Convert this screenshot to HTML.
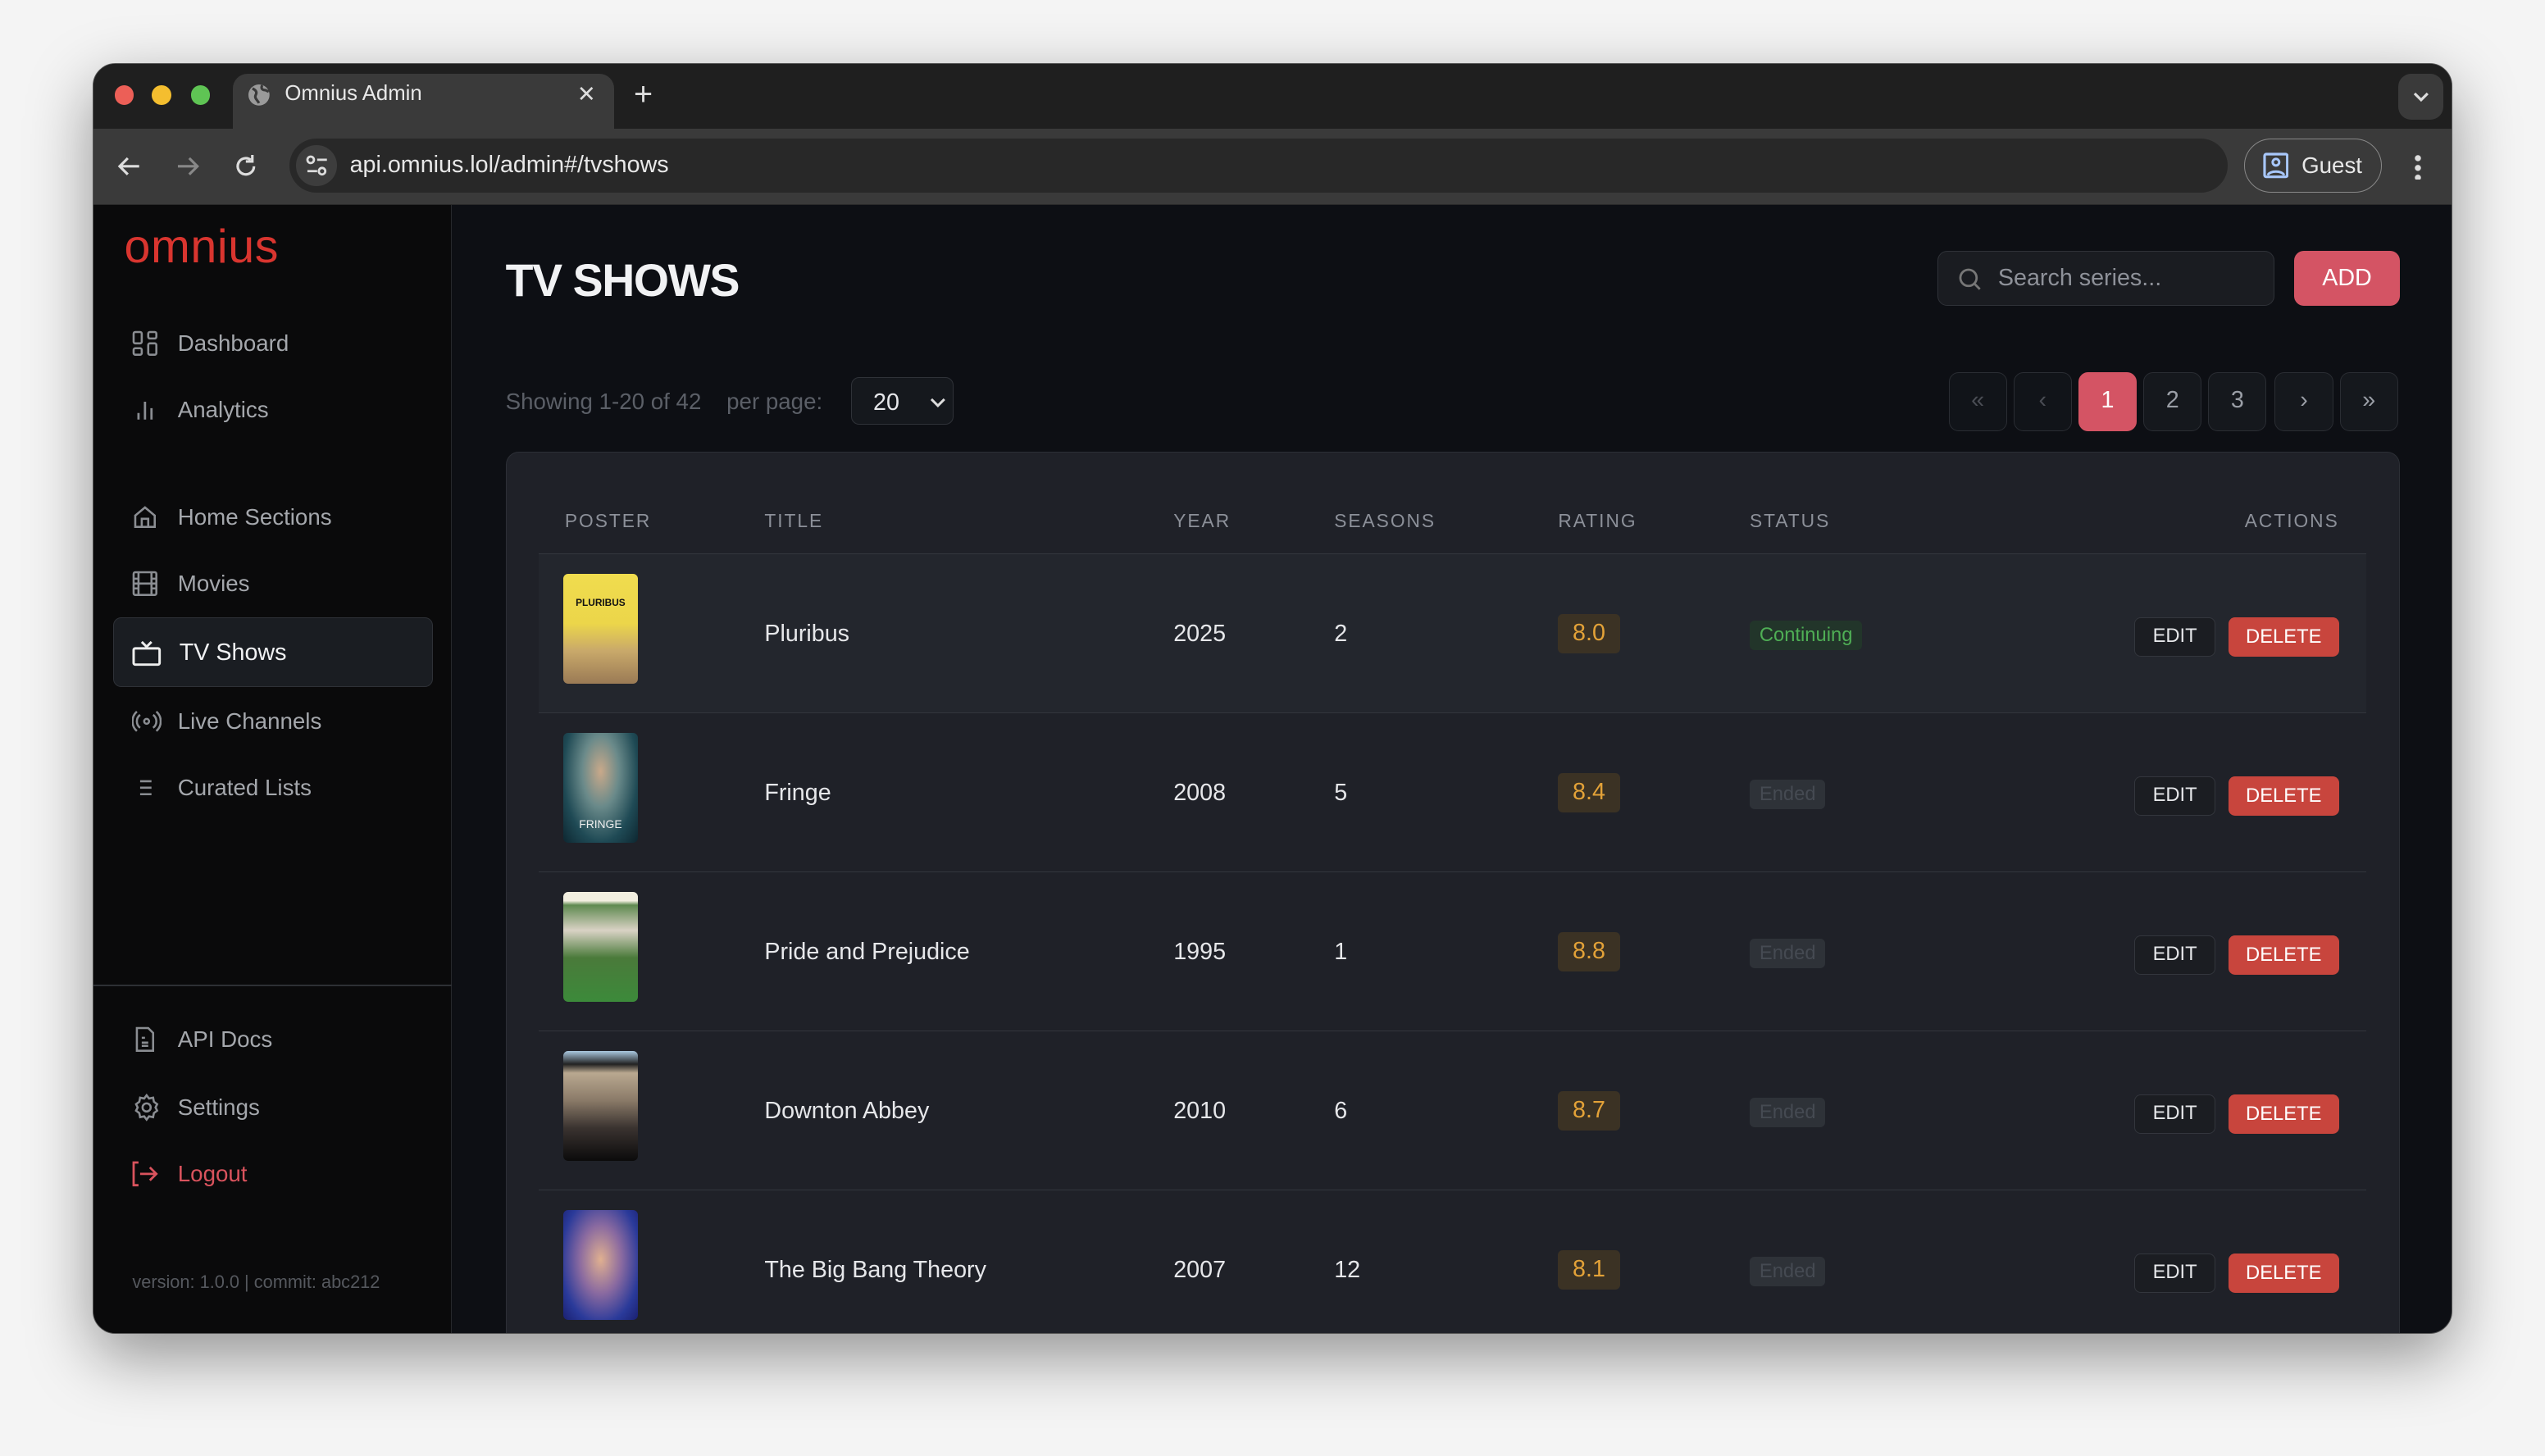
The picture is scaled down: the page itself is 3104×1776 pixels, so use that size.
<!DOCTYPE html>
<html><head><meta charset="utf-8">
<style>
*{box-sizing:border-box;margin:0;padding:0}
html,body{width:3104px;height:1776px;overflow:hidden;background:#f3f3f3}
#z{zoom:1.9796;width:1568px;height:897px;position:relative;font-family:"Liberation Sans",sans-serif;background:#f4f4f4}
.a{position:absolute}
.win{left:57px;top:39px;width:1454px;height:783px;border-radius:14px;background:#0d0f14;overflow:hidden;box-shadow:0 14px 40px rgba(0,0,0,.4);border:1px solid #555}
.tabbar{left:0;top:0;width:1454px;height:40px;background:#1f1f1f}
.tl{width:12px;height:12px;border-radius:50%;top:13px}
.tab{left:86px;top:6px;width:235px;height:36px;background:#3a3a3a;border-radius:9px 9px 0 0;color:#e8e8e8;font-size:13px}
.toolbar{left:0;top:40px;width:1454px;height:47px;background:#3a3a3a;border-bottom:1px solid #2a2a2a}
.url{left:121px;top:6px;width:1194px;height:33px;border-radius:17px;background:#282828;color:#e8e8e8;font-size:14.5px}
.side{left:0;top:87px;width:221px;height:700px;background:#0a0a0b;border-right:1px solid #26282c}
.nav{left:24px;font-size:14px;color:#a4a7ac;height:20px;line-height:20px}
.nav svg{position:absolute;left:0;top:2px}
.nav span{position:absolute;left:28px;white-space:nowrap}
.main{left:221px;top:87px;width:1233px;height:700px}
.card{left:254px;top:152px;width:1167px;height:600px;background:#1f2128;border:1px solid #2c2f36;border-radius:8px}
.th{top:35px;font-size:11.5px;letter-spacing:1px;color:#8c9099}
.row{left:20px;width:1126px;height:98px;border-top:1px solid #33363d}
.row .c{position:absolute;top:0;height:98px;line-height:98px;font-size:14.5px;color:#e6e7ea}
.poster{position:absolute;left:15px;top:12px;width:46px;height:68px;border-radius:3px;overflow:hidden}
.rat{position:absolute;left:628px;top:37px;width:38px;height:24px;border-radius:3px;background:#3b3224;color:#e3a238;font-size:14.5px;text-align:center;line-height:24px}
.st{position:absolute;left:746px;top:41px;height:18px;border-radius:3px;font-size:12px;line-height:18px;padding:0 6px}
.edit{position:absolute;left:983px;top:39px;width:50px;height:24px;border:1px solid #33363d;border-radius:4px;background:#1b1d22;color:#e6e7ea;font-size:12px;text-align:center;line-height:22px}
.del{position:absolute;left:1041px;top:39px;width:68px;height:24px;border-radius:4px;background:#c8453d;color:#fff;font-size:12px;text-align:center;line-height:24px}
.pg{top:103px;width:36px;height:36px;border:1px solid #2a2d33;border-radius:6px;background:#15181d;color:#9a9ea6;font-size:14.5px;text-align:center;line-height:34px}
</style></head><body><div id="z">
<div class="a win">
 <div class="a tabbar">
  <div class="a tl" style="left:13px;background:#ec5f57"></div>
  <div class="a tl" style="left:36px;background:#f4be2f"></div>
  <div class="a tl" style="left:60px;background:#5fc454"></div>
  <div class="a tab">
   <svg class="a" style="left:9px;top:6px" width="14" height="14" viewBox="0 0 14 14"><circle cx="7" cy="7" r="6.5" fill="#9a9a9a"/><path d="M3 3c2 1 3 2 2 4s1 3 2 5M9 1c-1 2 0 3 2 3l2 1" stroke="#3a3a3a" stroke-width="1.6" fill="none"/></svg>
   <span class="a" style="left:32px;top:5px">Omnius Admin</span>
   <span class="a" style="left:212px;top:4px;font-size:14px;color:#ddd">✕</span>
  </div>
  <span class="a" style="left:333px;top:9px;color:#ddd;font-size:20px;line-height:20px">+</span>
  <div class="a" style="left:1420px;top:6px;width:28px;height:28px;border-radius:8px;background:#3a3a3a"><svg class="a" style="left:9px;top:10px" width="10" height="8"><path d="M1 2l4 4 4-4" stroke="#ddd" stroke-width="1.6" fill="none"/></svg></div>
 </div>
 <div class="a toolbar">
  <svg class="a" style="left:14px;top:15px" width="16" height="16"><path d="M14 8H2M7 3L2 8l5 5" stroke="#ddd" stroke-width="1.6" fill="none"/></svg>
  <svg class="a" style="left:50px;top:15px" width="16" height="16"><path d="M2 8h12M9 3l5 5-5 5" stroke="#888" stroke-width="1.6" fill="none"/></svg>
  <svg class="a" style="left:86px;top:15px" width="16" height="16"><path d="M13 8a5 5 0 1 1-2-4M12 1v4H8" stroke="#ddd" stroke-width="1.6" fill="none"/></svg>
  <div class="a url">
   <div class="a" style="left:4px;top:4px;width:25px;height:25px;border-radius:50%;background:#3d3d3d"></div>
   <svg class="a" style="left:9px;top:9px" width="16" height="16"><circle cx="4" cy="4" r="2" stroke="#ddd" fill="none" stroke-width="1.4"/><path d="M8 4h6M2 11h6" stroke="#ddd" stroke-width="1.4"/><circle cx="11" cy="11" r="2" stroke="#ddd" fill="none" stroke-width="1.4"/></svg>
   <span class="a" style="left:37px;top:8px">api.omnius.lol/admin#/tvshows</span>
  </div>
  <div class="a" style="left:1325px;top:6px;width:85px;height:33px;border:1px solid #888;border-radius:17px;color:#e8e8e8;font-size:14px">
   <svg class="a" style="left:11px;top:8px" width="16" height="16"><rect x="1" y="1" width="14" height="14" rx="1" stroke="#a8c7fa" stroke-width="1.6" fill="none"/><circle cx="8" cy="6" r="2" stroke="#a8c7fa" stroke-width="1.5" fill="none"/><path d="M3 14c1-3 9-3 10 0" stroke="#a8c7fa" stroke-width="1.5" fill="none"/></svg>
   <span class="a" style="left:35px;top:8px">Guest</span>
  </div>
  <div class="a" style="left:1430px;top:15px;width:4px;height:16px;background:radial-gradient(circle,#ddd 1.7px,transparent 2px) 0 0/4px 6px"></div>
 </div>
 <div class="a side">
  <div class="a" style="left:19px;top:9px;font-size:29px;color:#d9352f;letter-spacing:0.3px;transform:scaleY(1.0)">omnius</div>
  <div class="a nav" style="top:75px"><svg width="16" height="16" viewBox="0 0 16 16" fill="none" stroke="#8a8d92" stroke-width="1.3"><rect x="1" y="1" width="5" height="7" rx="1"/><rect x="10" y="1" width="5" height="4" rx="1"/><rect x="1" y="11" width="5" height="4" rx="1"/><rect x="10" y="8" width="5" height="7" rx="1"/></svg><span>Dashboard</span></div>
  <div class="a nav" style="top:116px"><svg width="16" height="16" fill="none" stroke="#8a8d92" stroke-width="1.4"><path d="M4 14v-4M8 14V3M12 14V7"/></svg><span>Analytics</span></div>
  <div class="a nav" style="top:182px"><svg width="16" height="16" fill="none" stroke="#8a8d92" stroke-width="1.3"><path d="M2 7l6-5 6 5v7H2zM6 14V9h4v5"/></svg><span>Home Sections</span></div>
  <div class="a nav" style="top:223px"><svg width="16" height="16" fill="none" stroke="#8a8d92" stroke-width="1.3"><rect x="1" y="1" width="14" height="14" rx="1"/><path d="M4 1v14M12 1v14M1 5h3M1 8h14M1 11h3M12 5h3M12 11h3"/></svg><span>Movies</span></div>
  <div class="a" style="left:12px;top:254px;width:197px;height:43px;border-radius:5px;background:#1a1d22;border:1px solid #2e3137"></div>
  <div class="a nav" style="top:266px;color:#f0f1f3;font-size:14.5px"><svg width="18" height="16" fill="none" stroke="#eee" stroke-width="1.5"><rect x="1" y="5" width="16" height="10" rx="1"/><path d="M6 1l3 3 3-3"/></svg><span style="left:29px">TV Shows</span></div>
  <div class="a nav" style="top:308px"><svg width="18" height="16" fill="none" stroke="#8a8d92" stroke-width="1.3"><circle cx="9" cy="8" r="1.5"/><path d="M5 4a5 5 0 0 0 0 8M13 4a5 5 0 0 1 0 8M3 2a8 8 0 0 0 0 12M15 2a8 8 0 0 1 0 12"/></svg><span>Live Channels</span></div>
  <div class="a nav" style="top:349px"><svg width="16" height="16" fill="none" stroke="#8a8d92" stroke-width="1.3"><path d="M5 4h7M5 8h7M5 12h7"/></svg><span>Curated Lists</span></div>
  <div class="a" style="left:0;top:480px;width:221px;height:1px;background:#2e3035"></div>
  <div class="a nav" style="top:504px"><svg width="16" height="16" fill="none" stroke="#8a8d92" stroke-width="1.3"><path d="M3 1h7l3 3v11H3zM6 7h2M6 10h4M6 12h4"/></svg><span>API Docs</span></div>
  <div class="a nav" style="top:546px"><svg width="18" height="18" viewBox="0 0 18 18" fill="none" stroke="#8a8d92" stroke-width="1.3" style="top:1px"><circle cx="9" cy="9" r="2.5"/><path d="M9 1.5l1.5 2 2.5-.5.5 2.5 2 1.5-1 2 1 2-2 1.5-.5 2.5-2.5-.5L9 16.5l-1.5-2-2.5.5-.5-2.5-2-1.5 1-2-1-2 2-1.5.5-2.5 2.5.5z"/></svg><span>Settings</span></div>
  <div class="a nav" style="top:587px;color:#d9535d"><svg width="16" height="16" fill="none" stroke="#d9535d" stroke-width="1.4"><path d="M4 1H1v14h3M5 8h10M11 4l4 4-4 4"/></svg><span>Logout</span></div>
  <div class="a" style="left:24px;top:657px;font-size:11px;color:#55585e;white-space:nowrap">version: 1.0.0 | commit: abc212</div>
 </div>
 <div class="a main">
  <div class="a" style="left:33px;top:30px;font-size:28px;font-weight:bold;color:#f1f2f4;letter-spacing:-0.7px">TV SHOWS</div>
  <div class="a" style="left:915px;top:28px;width:208px;height:34px;border:1px solid #2f3238;border-radius:6px;background:#1a1c21;color:#8e9199;font-size:14.5px">
   <svg class="a" style="left:12px;top:9px" width="16" height="16" fill="none" stroke="#777" stroke-width="1.4"><circle cx="7" cy="7" r="5"/><path d="M11 11l3 3"/></svg>
   <span class="a" style="left:37px;top:8px">Search series...</span>
  </div>
  <div class="a" style="left:1135px;top:28px;width:65px;height:34px;border-radius:6px;background:#d45464;color:#fff;font-size:14.5px;text-align:center;line-height:34px">ADD</div>
  <div class="a" style="left:33px;top:113px;font-size:14px;color:#5b5f67;white-space:nowrap">Showing 1-20 of 42&nbsp;&nbsp;&nbsp; per page:</div>
  <div class="a" style="left:246px;top:106px;width:63px;height:29px;border:1px solid #2f3238;border-radius:5px;background:#15181d;color:#e6e7ea;font-size:14.5px"><span class="a" style="left:13px;top:7px">20</span><svg class="a" style="left:48px;top:11px" width="10" height="8"><path d="M1 2l4 4 4-4" stroke="#ddd" stroke-width="1.5" fill="none"/></svg></div>
  <div class="a pg" style="left:922px;color:#4a4d54;background:#111419">«</div>
  <div class="a pg" style="left:962px;color:#4a4d54;background:#111419">‹</div>
  <div class="a pg" style="left:1002px;background:#d45464;border-color:#d45464;color:#fff">1</div>
  <div class="a pg" style="left:1042px">2</div>
  <div class="a pg" style="left:1082px">3</div>
  <div class="a pg" style="left:1123px">›</div>
  <div class="a pg" style="left:1163px">»</div>
  <div class="a card" style="left:33px">
   <div class="a th" style="left:36px">POSTER</div>
   <div class="a th" style="left:159px">TITLE</div>
   <div class="a th" style="left:411px">YEAR</div>
   <div class="a th" style="left:510px">SEASONS</div>
   <div class="a th" style="left:648px">RATING</div>
   <div class="a th" style="left:766px">STATUS</div>
   <div class="a th" style="left:1071px">ACTIONS</div>

   <div class="a row" style="top:62px;background:#23262d">
    <div class="poster" style="background:linear-gradient(180deg,#f0dc4e 0,#ecd64a 45%,#c9a96a 70%,#9a7a55 100%)"><div style="position:absolute;top:14px;width:100%;text-align:center;font-size:6px;font-weight:bold;color:#111">PLURIBUS</div></div>
    <div class="c" style="left:139px">Pluribus</div><div class="c" style="left:391px">2025</div><div class="c" style="left:490px">2</div>
    <div class="rat">8.0</div><div class="st" style="background:#22352a;color:#4fae55">Continuing</div>
    <div class="edit">EDIT</div><div class="del">DELETE</div>
   </div>
   <div class="a row" style="top:160px">
    <div class="poster" style="background:radial-gradient(ellipse at 50% 35%,#c9a98a 0,#6a8a8a 35%,#1f4a55 70%,#0d2630 100%)"><div style="position:absolute;top:52px;width:100%;text-align:center;font-size:7px;color:#eee">FRINGE</div></div>
    <div class="c" style="left:139px">Fringe</div><div class="c" style="left:391px">2008</div><div class="c" style="left:490px">5</div>
    <div class="rat">8.4</div><div class="st" style="background:#2e3238;color:#454a52">Ended</div>
    <div class="edit">EDIT</div><div class="del">DELETE</div>
   </div>
   <div class="a row" style="top:258px">
    <div class="poster" style="background:linear-gradient(180deg,#f2efe0 0,#f2efe0 8%,#5f8a50 12%,#d9d2c5 35%,#4a7a3a 60%,#3c8a3a 100%)"></div>
    <div class="c" style="left:139px">Pride and Prejudice</div><div class="c" style="left:391px">1995</div><div class="c" style="left:490px">1</div>
    <div class="rat">8.8</div><div class="st" style="background:#2e3238;color:#454a52">Ended</div>
    <div class="edit">EDIT</div><div class="del">DELETE</div>
   </div>
   <div class="a row" style="top:356px">
    <div class="poster" style="background:linear-gradient(180deg,#aac8e0 0,#222 12%,#b9a890 20%,#8a7a68 45%,#3a3330 70%,#0b0b0b 100%)"></div>
    <div class="c" style="left:139px">Downton Abbey</div><div class="c" style="left:391px">2010</div><div class="c" style="left:490px">6</div>
    <div class="rat">8.7</div><div class="st" style="background:#2e3238;color:#454a52">Ended</div>
    <div class="edit">EDIT</div><div class="del">DELETE</div>
   </div>
   <div class="a row" style="top:454px">
    <div class="poster" style="background:radial-gradient(ellipse at 50% 45%,#e0b090 0,#8a6aa0 40%,#2a3a9a 75%,#1a2070 100%)"></div>
    <div class="c" style="left:139px">The Big Bang Theory</div><div class="c" style="left:391px">2007</div><div class="c" style="left:490px">12</div>
    <div class="rat">8.1</div><div class="st" style="background:#2e3238;color:#454a52">Ended</div>
    <div class="edit">EDIT</div><div class="del">DELETE</div>
   </div>
  </div>
 </div>
</div>
</div></body></html>
